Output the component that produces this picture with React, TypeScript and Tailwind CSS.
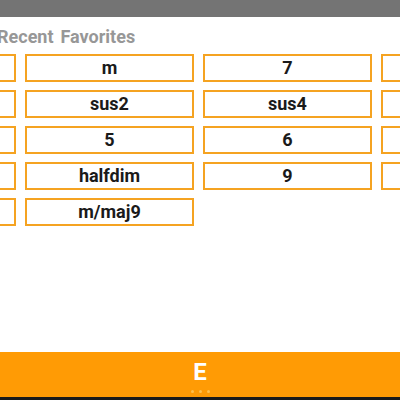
const rows: string[][] = [
  ["", "m", "7", ""],
  ["", "sus2", "sus4", ""],
  ["", "5", "6", ""],
  ["", "halfdim", "9", ""],
  ["", "m/maj9"],
];

const ChordButton = ({ label }: { label: string }) => (
  <div className="h-[28px] border-2 border-[#f5a321] flex items-center justify-center text-[18px] font-bold text-[#1a1a1a] leading-none">
    {label}
  </div>
);

export default function App() {
  return (
    <div
      className="w-[400px] h-[400px] overflow-hidden bg-white flex flex-col"
      style={{ fontFamily: "Roboto, 'Liberation Sans', sans-serif" }}
    >
      <div className="h-[17px] bg-[#747474] shrink-0" />

      <div className="flex gap-[7px] ml-[-3px] mt-[9px] text-[18px] font-bold text-[#979797] leading-[22px]">
        <span>Recent</span>
        <span>Favorites</span>
      </div>

      <div className="ml-[-153px] mt-[6px] grid grid-cols-[169px_169px_169px_169px] gap-x-[9px] gap-y-[8px]">
        {rows.map((row, i) =>
          row.map((label, j) => <ChordButton key={`${i}-${j}`} label={label} />)
        )}
      </div>

      <div className="flex-1" />

      <div className="h-[45px] bg-[#ff9b05] shrink-0 flex flex-col items-center justify-center relative">
        <span className="text-[24px] font-bold text-white leading-none mt-[3px]">E</span>
        <div className="flex gap-[5px] mt-[6px]">
          <span className="w-[3px] h-[3px] rounded-full bg-[#ffc04d]" />
          <span className="w-[3px] h-[3px] rounded-full bg-[#ffc04d]" />
          <span className="w-[3px] h-[3px] rounded-full bg-[#ffc04d]" />
        </div>
      </div>
      <div className="h-[3px] bg-[#1a1a1a] shrink-0" />
    </div>
  );
}
